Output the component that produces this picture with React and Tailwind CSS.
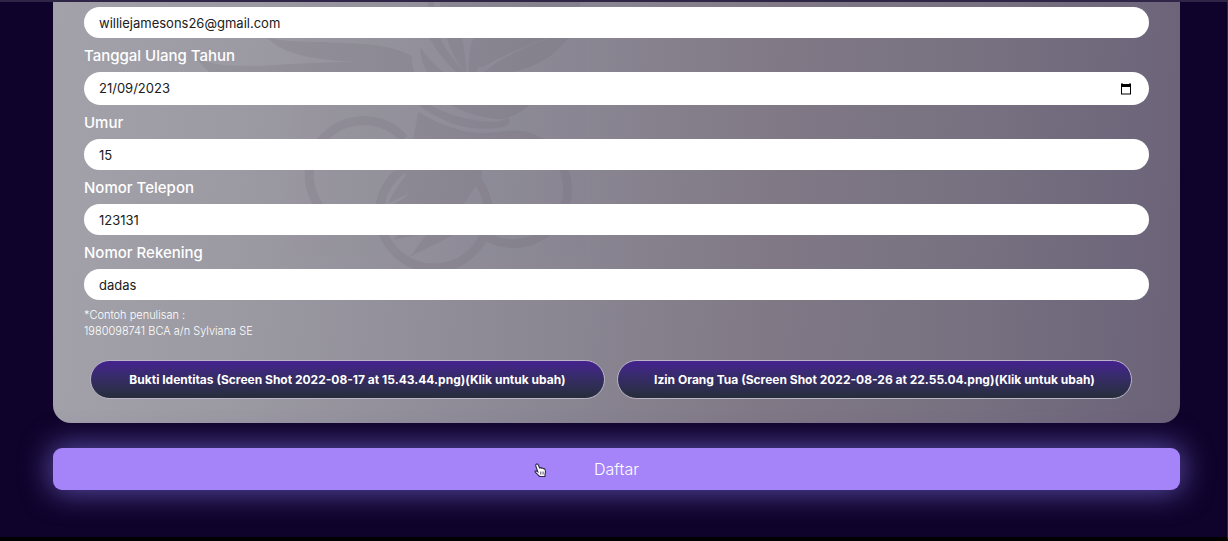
function Watermark() {
  return (
    <svg
      className="pointer-events-none absolute left-[127px] top-0 h-[289px] w-[420px]"
      viewBox="0 6 1260 867"
      aria-hidden="true"
    >
      <g fill="#5d5867" stroke="none" opacity="0.13">
        <path d="M262 114C380 138 600 110 695 168Q695 195 706 230L110 230Q60 200 50 170Q80 202 250 197Q400 186 520 185Q320 178 262 114Z" />
        <path d="M700 0H740L748 30V114Q775 165 828 216H790Q750 185 720 140Q722 190 745 220L800 270H935L1000 216Q1110 190 1165 114L1205 0H1170Q1150 60 1100 116Q980 160 912 216H890Q910 160 915 114H880Q865 150 865 216H860Q855 160 848 114H828Q835 165 852 214Q805 165 780 114L760 0Z" />
        <path d="M800 114H828Q835 165 852 214Q815 165 800 114Z M908 114H1100Q980 160 912 200H895Q900 150 908 114Z M780 0H1170Q1150 60 1100 114H780Z" />
        <path d="M790 300H1060Q1030 345 960 358Q860 350 790 300Z" />
        <path d="M740 310Q830 362 940 366Q965 365 985 352Q1000 375 960 383Q890 392 830 375Q760 350 718 318Z" />
        <path d="M715 335Q800 390 900 400Q1010 385 1090 417L920 430L905 510Q910 540 885 562L850 614L640 612Q670 600 687 580Q660 594 625 610Q640 570 675 530L700 417Z" />
        <path d="M850 690L690 770Q715 740 740 700L640 720L690 650H870Z" />
        <g fill="none" stroke="#5d5867" strokeWidth="27">
          <path d="M673 417A163 163 0 1 0 604 679" />
          <path d="M905 435A163 163 0 1 1 920 710" />
          <circle cx="762" cy="641" r="163" />
        </g>
      </g>
    </svg>
  );
}

const fieldClass =
  "block h-[31px] w-full rounded-full bg-white px-[15px] text-[13px] text-[#202020] outline-none";

function Field({ id, label, children, ...props }) {
  return (
    <div>
      <label htmlFor={id} className="block pb-[7px] pt-[9px] text-[15px] font-medium leading-[18px] text-white">
        {label}
      </label>
      {children || <input id={id} className={fieldClass} {...props} />}
    </div>
  );
}

function UploadButton({ children }) {
  return (
    <button
      type="button"
      className="h-[39px] flex-1 whitespace-nowrap rounded-full border border-[#b9b5c6] bg-gradient-to-b from-[#45218f] to-[#272d3a] px-4 text-[12px] font-bold text-white"
    >
      {children}
    </button>
  );
}

export default function App() {
  return (
    <div className="flex min-h-screen flex-col border-b-4 border-b-black border-r border-r-[#302a42] bg-[#0f032b] font-['Inter',sans-serif]">
      <div className="h-[2px] bg-[#2f2547]" />
      <form className="ml-[53px] mr-[47px]" onSubmit={(e) => e.preventDefault()}>
        <div className="relative overflow-hidden rounded-b-[18px] bg-[linear-gradient(94deg,#a3a2aa_0%,#9b99a2_18%,#8c8995_42%,#807885_64%,#767080_82%,#6b6278_100%)] px-[31px] pb-6 pt-[5px]">
          <Watermark />
          <div className="relative">
            <input
              type="email"
              aria-label="Email"
              defaultValue="williejamesons26@gmail.com"
              className={fieldClass}
            />
            <Field id="birthday" label="Tanggal Ulang Tahun">
              <div className="flex h-[33px] items-center rounded-full bg-white pl-[15px] pr-[17px]">
                <input
                  id="birthday"
                  defaultValue="21/09/2023"
                  className="min-w-0 flex-1 bg-transparent text-[13px] text-[#202020] outline-none"
                />
                <button type="button" aria-label="Pilih tanggal">
                  <svg width="12" height="12" viewBox="0 0 12 12" aria-hidden="true">
                    <path d="M1.5 1V0h1v1h7V0h1v1H11v10.500H1V1ZM2 4v6.500h8V4Z" fill="#000" fillRule="evenodd" />
                  </svg>
                </button>
              </div>
            </Field>
            <Field id="age" label="Umur" defaultValue="15" />
            <Field id="phone" label="Nomor Telepon" defaultValue="123131" />
            <Field id="account" label="Nomor Rekening" defaultValue="dadas" />
            <p className="mt-[7px] text-[11px] font-light leading-4 text-white">
              *Contoh penulisan :<br />
              1980098741 BCA a/n Sylviana SE
            </p>
            <div className="mt-[21px] flex gap-3 pl-[6px] pr-[17px]">
              <UploadButton>
                Bukti Identitas (Screen Shot 2022-08-17 at 15.43.44.png)(Klik untuk ubah)
              </UploadButton>
              <UploadButton>
                Izin Orang Tua (Screen Shot 2022-08-26 at 22.55.04.png)(Klik untuk ubah)
              </UploadButton>
            </div>
          </div>
        </div>
        <button
          type="submit"
          className="relative mt-[25px] block h-[42px] w-full rounded-[9px] bg-[#a484f8] text-[16px] font-light text-white shadow-[0_0_30px_2px_#5c4eaa]"
        >
          Daftar
          <svg
            className="absolute left-[43%] top-[15px] -ml-1 h-[15px] w-[13px]"
            viewBox="0 0 13 15"
            aria-hidden="true"
          >
            <path
              d="M2.200 1.200Q3.400.4 4.200 1.700L5.600 5Q6.700 4.200 7.500 5.200Q8.700 4.600 9.300 5.700Q10.600 5.300 11.100 6.600Q12.300 9.500 11 11.500V13.500H5.600Q3.600 11.500 1.200 9.200Q.6 7.900 2 7.800L3.800 8.800L1.800 3Q1.400 1.900 2.200 1.200Z"
              fill="#fff"
              stroke="#302848"
              strokeWidth="1.100"
            />
            <path d="M6.500 8.500v3M8.100 8.500v3M9.700 8.500v3" stroke="#4b4560" strokeWidth=".7" />
          </svg>
        </button>
      </form>
    </div>
  );
}
